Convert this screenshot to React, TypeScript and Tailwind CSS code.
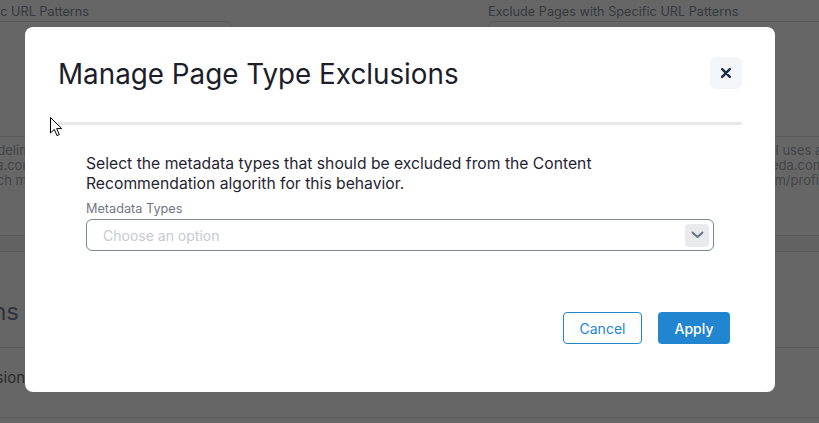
import React from "react";

function Column({
  label,
  lines,
}: {
  label: string;
  lines: string[];
}) {
  return (
    <div className="flex w-[390px] shrink-0 flex-col">
      <div className="whitespace-nowrap text-[12.7px] leading-4 text-[#8a90a0]">{label}</div>
      <div className="mt-px h-[116px] rounded-md border border-[#e0e0e0] bg-white" />
      <div className="mt-[6px] flex flex-col text-[13px] leading-[15px] text-[#a9acb4]">
        {lines.map((l) => (
          <div key={l} className="whitespace-nowrap">
            {l}
          </div>
        ))}
      </div>
    </div>
  );
}

function Fragment({ text, className }: { text: string; className: string }) {
  return (
    <div className={`flex justify-end whitespace-nowrap ${className}`}>
      <span className="shrink-0">{text}</span>
    </div>
  );
}

export default function App() {
  return (
    <div className="relative h-[423px] w-[819px] overflow-hidden bg-white font-['Inter','Noto_Sans',sans-serif]">
      {/* underlying page */}
      <div className="flex flex-col pt-[4px]">
        <div className="-ml-[158px] flex gap-[256px]">
          <Column
            label="Include Pages with Specific URL Patterns"
            lines={[
              "Enter all patterns using a delimiter of commas",
              "e.g. www.myencyclopedia.com/articles",
              "Rules are used so that each match is included",
            ]}
          />
          <Column
            label="Exclude Pages with Specific URL Patterns"
            lines={[
              "Insert one URL pattern per line. A matching tool uses a wildcard",
              "For example, you would use https://www.alameda.com/about",
              "or a profile page as in https://www.alameda.com/profile/settings",
            ]}
          />
        </div>
        <div className="mt-[47px] h-[17px] border-y border-[#e2e2e2] bg-[#f5f5f5]" />
        <div className="flex h-[96px] items-end border-b border-[#e2e2e2] pb-[20px]">
          <Fragment text="Page Type Exclusions" className="w-[19px] text-[24px] leading-[30px] text-[#7c8293]" />
        </div>
        <div className="flex h-[70px] items-start border-b border-[#e2e2e2] pt-[19px]">
          <Fragment text="Page Type Exclusion" className="w-[25px] text-[15px] leading-[22px] text-[#6e6e72]" />
        </div>
      </div>

      {/* dim overlay + modal */}
      <div className="absolute inset-0 bg-black/60 pl-[25px] pt-[27px]">
        <div className="flex h-[365px] w-[750px] flex-col rounded-lg bg-white">
          <div className="flex items-start justify-between px-[33px] pt-[30px]">
            <h2 className="text-[27.8px] leading-[34px] font-normal text-[#1c1d2a]">
              Manage Page Type Exclusions
            </h2>
            <button className="flex h-8 w-8 items-center justify-center rounded-md bg-[#f4f5f8]">
              <svg width="10" height="10" viewBox="0 0 10 10" fill="none">
                <path d="M1.2 1.2 L8.8 8.8 M8.8 1.2 L1.2 8.8" stroke="#1e2b45" strokeWidth="2.4" strokeLinecap="round" />
              </svg>
            </button>
          </div>
          <div className="mx-[33px] mt-[31px] h-[3px] bg-[#e9e9e9]" />
          <div className="flex flex-col px-[61px]">
            <p className="mt-[29px] text-[15.7px] leading-5 text-[#1f2533]">
              Select the metadata types that should be excluded from the Content
              <br />
              Recommendation algorith for this behavior.
            </p>
            <label className="mt-[7px] text-[12.7px] leading-4 text-[#6f7684]">Metadata Types</label>
            <div className="mt-[2px] flex h-8 items-center justify-between rounded-md border border-[#7c8593] pl-[16px] pr-[4px]">
              <span className="text-[14px] text-[#c6cad2]">Choose an option</span>
              <span className="flex h-[23px] w-6 items-center justify-center rounded bg-[#e8eaee]">
                <svg width="13" height="8" viewBox="0 0 13 8" fill="none">
                  <path d="M1.5 1.5 L6.5 6 L11.5 1.5" stroke="#687589" strokeWidth="2" strokeLinecap="round" strokeLinejoin="round" />
                </svg>
              </span>
            </div>
          </div>
          <div className="mt-[61px] flex justify-end gap-4 pr-[45px]">
            <button className="h-8 w-[79px] rounded border border-[#2185d0] bg-white text-[14px] text-[#2185d0]">
              Cancel
            </button>
            <button className="h-8 w-[72px] rounded bg-[#2185d0] text-[14px] font-medium text-white">
              Apply
            </button>
          </div>
        </div>
      </div>

      {/* mouse pointer */}
      <svg
        className="absolute left-[50px] top-[117px]"
        width="13"
        height="20"
        viewBox="0 0 13 20"
        fill="none"
      >
        <path
          d="M0.5 0.5 L0.5 16 L4.3 12.4 L7 18.6 L9.3 17.6 L6.7 11.6 L11.8 11.6 Z"
          fill="#ffffff"
          stroke="#000000"
          strokeWidth="1"
          strokeLinejoin="round"
        />
      </svg>
    </div>
  );
}
